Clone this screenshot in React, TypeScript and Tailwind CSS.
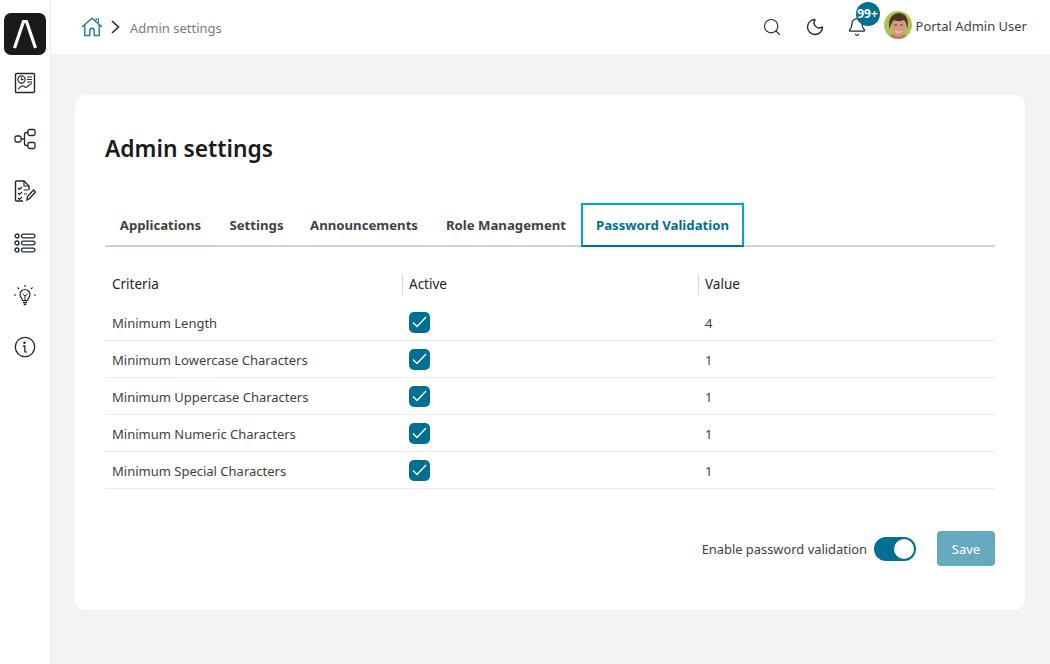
import { Moon, Search, Bell } from "lucide-react";

const font = "font-['Noto_Sans','Open_Sans',sans-serif]";

const rows = [
  { name: "Minimum Length", value: "4" },
  { name: "Minimum Lowercase Characters", value: "1" },
  { name: "Minimum Uppercase Characters", value: "1" },
  { name: "Minimum Numeric Characters", value: "1" },
  { name: "Minimum Special Characters", value: "1" },
];

const Logo = () => (
  <div className="w-[42px] h-[42px] rounded-[7px] bg-[#1a1a1a] flex items-center justify-center">
    <svg width="42" height="42" viewBox="0 0 42 42" fill="none">
      <path d="M10.500 35 19.500 8.500h3L31.500 35" stroke="#fff" strokeWidth="3.200" />
    </svg>
  </div>
);

const DashIcon = () => (
  <svg width="22" height="22" viewBox="0 0 22 22" fill="none" stroke="#1f2933" strokeWidth="1.2">
    <rect x="1.500" y="1.500" width="19" height="19" rx="1" strokeWidth="1.400" />
    <circle cx="7.500" cy="7.500" r="3.600" />
    <path d="M7.500 5.500v2.200h2M13 5h5M13 7.500h5M13 10h5" />
    <path d="M4 17c2-1 3-3.500 5-3s2 2 4 1 2-3 5-3.500" />
  </svg>
);

const FlowIcon = () => (
  <svg width="22" height="22" viewBox="0 0 22 22" fill="none" stroke="#1f2933" strokeWidth="1.3">
    <rect x="1" y="8" width="6" height="6" rx="1.500" />
    <rect x="14" y="1.500" width="7" height="6" rx="1.500" />
    <rect x="14" y="14.500" width="7" height="6" rx="1.500" />
    <path d="M7 11h3.500M14 4.500h-1.500a2 2 0 0 0-2 2v9a2 2 0 0 0 2 2H14" />
  </svg>
);

const TaskIcon = () => (
  <svg width="22" height="22" viewBox="0 0 22 22" fill="none" stroke="#1f2933" strokeWidth="1.2">
    <path d="M15 10V6l-5-5H2.500A1 1 0 0 0 1.500 2v18a1 1 0 0 0 1 1H9" strokeWidth="1.400" />
    <path d="M10 1v5h5" />
    <path d="m4 8 1.500 1.500L8 7M4 13l1.500 1.500L8 12M4 18l1.500 1.500L8 17M10 10h4M10 14h3" />
    <path d="m13 20 .5-3.500 6-6.500 2 2-6 6.500z" strokeWidth="1.400" />
  </svg>
);

const ListIcon = () => (
  <svg width="22" height="20" viewBox="0 0 22 20" fill="none" stroke="#1f2933" strokeWidth="1.3">
    <circle cx="3" cy="3" r="2" />
    <circle cx="3" cy="10" r="2" />
    <circle cx="3" cy="17" r="2" />
    <rect x="7.500" y="1.200" width="13.500" height="3.600" rx="1.800" />
    <rect x="7.500" y="8.200" width="13.500" height="3.600" rx="1.800" />
    <rect x="7.500" y="15.200" width="13.500" height="3.600" rx="1.800" />
  </svg>
);

const BulbIcon = () => (
  <svg width="22" height="22" viewBox="0 0 22 22" fill="none" stroke="#1f2933" strokeWidth="1.2">
    <path d="M8.500 16.500c0-2-2.500-3-2.500-6a5 5 0 0 1 10 0c0 3-2.500 4-2.500 6z" />
    <path d="M9 18.500h4M9.700 20.500h2.600" strokeWidth="1.400" />
    <path d="m8.500 10 2.500 2 2.500-2M11 12v4" strokeWidth="1" />
    <path d="M11 1v2M3.500 3.500 5 5M18.500 3.500 17 5M0 11h2M20 11h2" />
  </svg>
);

const InfoIcon = () => (
  <svg width="22" height="22" viewBox="0 0 22 22" fill="none" stroke="#1f2933" strokeWidth="1.3">
    <circle cx="11" cy="11" r="9.700" />
    <circle cx="10.500" cy="6.800" r=".6" fill="#1f2933" />
    <path d="M9.300 10h1.500v5c0 .8.500 1.200 1.500 1" strokeLinecap="round" />
  </svg>
);

const HomeIcon = () => (
  <svg width="22" height="20" viewBox="0 0 22 20" fill="none" stroke="#1b7fa3" strokeWidth="1.400">
    <path d="M1 10 11 1.200 21 10" />
    <path d="M15 4V2h2.500v4" strokeWidth="1.100" />
    <path d="M3.800 8v10.500h5v-5a2.200 2.200 0 0 1 4.400 0v5h5V8" />
  </svg>
);

const Crumb = () => (
  <svg width="9" height="14" viewBox="0 0 9 14" fill="none" stroke="#323130" strokeWidth="1.700">
    <path d="m1 1 6.500 6L1 13" />
  </svg>
);

const Avatar = () => (
  <svg width="28" height="28" viewBox="0 0 28 28" className="rounded-full -translate-y-[2px]">
    <rect width="28" height="28" fill="#a9c653" />
    <path d="M5 28c0-4 4-6 9-6s9 2 9 6z" fill="#b9805f" />
    <ellipse cx="14.500" cy="15.500" rx="8" ry="10" fill="#d39c80" />
    <path d="M5.500 18C3.500 7 9 2 15 2s10.500 5 8.500 16c-.8-4-1.500-7-3.500-9-3 1.500-7.500 1.500-10 0-2 2-3.500 5-4.500 9z" fill="#4f3420" />
    <path d="M10 14h3M16 14h3" stroke="#5a3a26" strokeWidth="1" />
    <path d="M11.500 20.500c1.800.9 4.200.9 6 0" stroke="#efe0d6" strokeWidth="1" fill="none" />
  </svg>
);

const Checkbox = () => (
  <span className="w-[21px] h-[21px] rounded-[5px] bg-[#006f94] flex items-center justify-center">
    <svg width="15" height="12" viewBox="0 0 15 12" fill="none" stroke="#fff" strokeWidth="1.400">
      <path d="m1 6.500 4 4 9-9.500" />
    </svg>
  </span>
);

export default function App() {
  return (
    <div className={`${font} w-[1050px] h-[664px] flex overflow-hidden bg-[#f3f3f3] text-[#3f3f3f]`}>
      <aside className="w-[51px] shrink-0 bg-white border-r border-[#ebebeb] flex flex-col items-center pt-[13px]">
        <Logo />
        <div className="mt-[14px] flex flex-col items-center">
          <div className="h-[28px] flex items-center"><DashIcon /></div>
          <div className="h-[29px] mt-[27px] flex items-center"><FlowIcon /></div>
          <div className="h-[24px] mt-[26px] flex items-center"><TaskIcon /></div>
          <div className="h-[24px] mt-[28px] flex items-center"><ListIcon /></div>
          <div className="h-[24px] mt-[28px] flex items-center"><BulbIcon /></div>
          <div className="h-[24px] mt-[28px] flex items-center"><InfoIcon /></div>
        </div>
      </aside>

      <div className="flex-1 flex flex-col">
        <header className="h-[54px] bg-white flex items-center pl-[30px] pr-[23px]">
          <HomeIcon />
          <span className="ml-[8px]"><Crumb /></span>
          <span className="ml-[10px] pt-[3px] text-[13px] text-[#7a7a7a]">Admin settings</span>
          <div className="ml-auto flex items-center">
            <Search size={20} strokeWidth={1.4} className="text-[#1f2933]" />
            <Moon size={20} strokeWidth={1.6} className="ml-[23px] text-[#1f2933]" />
            <div className="relative ml-[22px]">
              <Bell size={20} strokeWidth={1.5} className="text-[#1f2933]" />
              <span className="absolute -top-[15px] left-[9px] w-[24px] h-[24px] rounded-full bg-[#006f94] text-white text-[12px] font-bold flex items-center justify-center">99+</span>
            </div>
            <div className="ml-[17px] flex items-center gap-[4px]">
              <Avatar />
              <span className="text-[13px]">Portal Admin User</span>
            </div>
          </div>
        </header>

        <main className="flex-1 pl-[24px] pr-[25px] pt-[41px]">
          <section className="h-[515px] bg-white rounded-[10px] px-[30px] pt-[35px]">
            <h1 className="text-[22.800px] leading-[38px] font-semibold text-[#1a1a1a]">Admin settings</h1>

            <nav className="mt-[35px] h-[44px] flex border-b-2 border-[#d2d5d8] text-[13.200px] font-bold text-[#424242]">
              <div className="w-[111px] h-[44px] shrink-0 pt-[1px] flex items-center justify-center border-y-2 border-t-transparent border-b-[#c3d3d6]">Applications</div>
              <div className="w-[81px] h-[44px] shrink-0 pt-[1px] flex items-center justify-center">Settings</div>
              <div className="w-[134px] h-[44px] shrink-0 pt-[1px] flex items-center justify-center">Announcements</div>
              <div className="w-[150px] h-[44px] shrink-0 pt-[1px] flex items-center justify-center">Role Management</div>
              <div className="w-[163px] h-[44px] shrink-0 pt-[1px] flex items-center justify-center border-2 border-[#00a4d9] border-b-[#006f94] text-[#006f94]">Password Validation</div>
            </nav>

            <div className="mt-[17px] grid grid-cols-[297px_296px_1fr] text-[13.500px] text-[#242424] h-[40px] items-center">
              <div className="pl-[7px]">Criteria</div>
              <div className="h-[21px] border-l border-[#d9d9d9] pl-[6px] flex items-center">Active</div>
              <div className="h-[21px] border-l border-[#d9d9d9] pl-[6px] flex items-center">Value</div>
            </div>

            {rows.map((r) => (
              <div key={r.name} className="grid grid-cols-[297px_296px_1fr] h-[37px] items-center border-b border-[#ebebeb] text-[13px]">
                <div className="pl-[7px] pt-[3px]">{r.name}</div>
                <div className="pl-[7px]"><Checkbox /></div>
                <div className="pl-[7px] pt-[3px]">{r.value}</div>
              </div>
            ))}

            <div className="mt-[42px] flex items-center justify-end">
              <span className="text-[12.900px] pt-[3px]">Enable password validation</span>
              <span className="ml-[7px] w-[42px] h-[24px] rounded-full bg-[#006f94] flex items-center justify-end pr-[2px]">
                <span className="w-[20px] h-[20px] rounded-full bg-white" />
              </span>
              <button className="ml-[21px] w-[58px] h-[35px] pt-[2px] rounded-[4px] bg-[#66a9bf] text-white text-[13px]">Save</button>
            </div>
          </section>
        </main>
      </div>
    </div>
  );
}
